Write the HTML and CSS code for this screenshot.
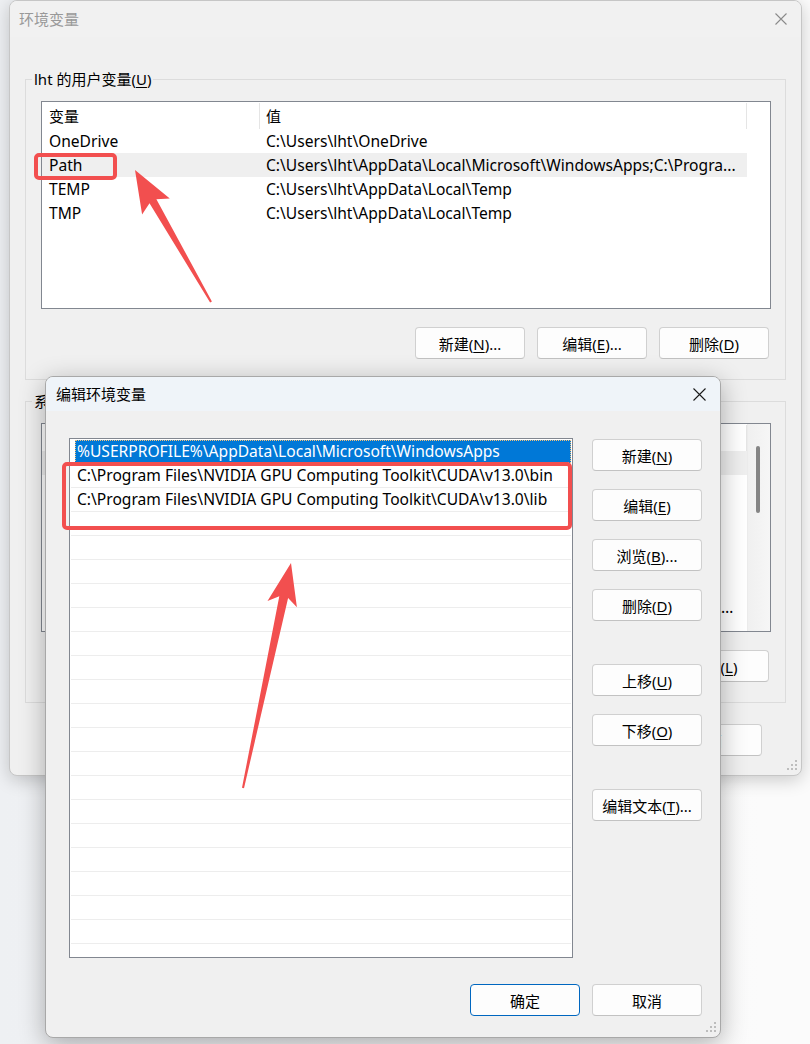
FILE: index.html
```html
<!DOCTYPE html>
<html lang="zh-CN">
<head>
    <meta charset="UTF-8">
    <title>环境变量</title>
    <link rel="stylesheet" href="styles.css">
</head>
<body>
<div class="desk">

    <!-- 后面的窗口：环境变量 -->
    <div class="win win-back">
        <div class="titlebar">
            <span class="title">环境变量</span>
            <svg class="close" width="12" height="12" viewBox="0 0 12 12"><path d="M0.5 0.5L11.5 11.5M11.5 0.5L0.5 11.5" stroke="#8a8a8a" stroke-width="1.1" fill="none"/></svg>
        </div>
        <div class="win-body">
            <fieldset class="group">
                <legend>lht 的用户变量(<u>U</u>)</legend>
                <div class="listview">
                    <div class="lv-main">
                        <div class="lv-head"><span class="c-name">变量</span><span class="c-val">值</span></div>
                        <div class="lv-row"><span class="c-name">OneDrive</span><span class="c-val">C:\Users\lht\OneDrive</span></div>
                        <div class="lv-row gray"><span class="c-name">Path</span><span class="c-val">C:\Users\lht\AppData\Local\Microsoft\WindowsApps;C:\Progra...</span></div>
                        <div class="lv-row"><span class="c-name">TEMP</span><span class="c-val">C:\Users\lht\AppData\Local\Temp</span></div>
                        <div class="lv-row"><span class="c-name">TMP</span><span class="c-val">C:\Users\lht\AppData\Local\Temp</span></div>
                    </div>
                </div>
                <div class="btn-row">
                    <button class="btn">新建(<u>N</u>)...</button>
                    <button class="btn">编辑(<u>E</u>)...</button>
                    <button class="btn">删除(<u>D</u>)</button>
                </div>
            </fieldset>

            <fieldset class="group group-sys">
                <legend>系统变量(<u>S</u>)</legend>
                <div class="listview tall">
                    <div class="lv-main">
                        <div class="lv-head"><span class="c-name">变量</span><span class="c-val">值</span></div>
                        <div class="lv-row gray"><span class="c-name">ComSpec</span><span class="c-val">C:\WINDOWS\system32\cmd.exe</span></div>
                        <div class="lv-row"><span class="c-name">DriverData</span><span class="c-val">C:\Windows\System32\Drivers\DriverData</span></div>
                        <div class="lv-row"><span class="c-name">JAVA_HOME</span><span class="c-val">C:\Program Files\Java\jdk-17</span></div>
                        <div class="lv-row"><span class="c-name">MAVEN_HOME</span><span class="c-val">C:\apache-maven-3.9.6</span></div>
                        <div class="lv-row"><span class="c-name">NUMBER_OF_PROCESSORS</span><span class="c-val">16</span></div>
                        <div class="lv-row"><span class="c-name">OS</span><span class="c-val">Windows_NT</span></div>
                        <div class="lv-row"><span class="c-name">Path</span><span class="c-val">C:\WINDOWS\system32;C:\WINDOWS;C:\WINDOWS\Wbem;C:\Program Files\NVI...</span></div>
                    </div>
                    <div class="vscroll"><div class="thumb"></div></div>
                </div>
                <div class="btn-row">
                    <button class="btn">新建(<u>W</u>)...</button>
                    <button class="btn">编辑(<u>I</u>)...</button>
                    <button class="btn">删除(<u>L</u>)</button>
                </div>
            </fieldset>

            <div class="dlg-foot back-foot">
                <button class="btn">确定</button>
                <button class="btn">取消</button>
            </div>
        </div>
        <svg class="grip" width="10" height="10" viewBox="0 0 10 10"><path d="M8 0h2v2h-2zM4 4h2v2h-2zM8 4h2v2h-2zM0 8h2v2h-2zM4 8h2v2h-2zM8 8h2v2h-2z" fill="#bdbdbd"/></svg>
    </div>

    <!-- 前面的窗口：编辑环境变量 -->
    <div class="win win-front">
        <div class="titlebar active">
            <span class="title">编辑环境变量</span>
            <svg class="close" width="13" height="13" viewBox="0 0 13 13"><path d="M0.5 0.5L12.5 12.5M12.5 0.5L0.5 12.5" stroke="#1a1a1a" stroke-width="1.1" fill="none"/></svg>
        </div>
        <div class="edit-body">
            <div class="pathlist">
                <div class="item"><span class="hl">%USERPROFILE%\AppData\Local\Microsoft\WindowsApps</span></div>
                <div class="item">C:\Program Files\NVIDIA GPU Computing Toolkit\CUDA\v13.0\bin</div>
                <div class="item">C:\Program Files\NVIDIA GPU Computing Toolkit\CUDA\v13.0\lib</div>
                <div class="item"></div>
                <div class="item"></div>
                <div class="item"></div>
                <div class="item"></div>
                <div class="item"></div>
                <div class="item"></div>
                <div class="item"></div>
                <div class="item"></div>
                <div class="item"></div>
                <div class="item"></div>
                <div class="item"></div>
                <div class="item"></div>
                <div class="item"></div>
                <div class="item"></div>
                <div class="item"></div>
                <div class="item"></div>
                <div class="item"></div>
                <div class="item"></div>
                <div class="item"></div>
            </div>
            <div class="side-btns">
                <button class="btn">新建(<u>N</u>)</button>
                <button class="btn">编辑(<u>E</u>)</button>
                <button class="btn">浏览(<u>B</u>)...</button>
                <button class="btn">删除(<u>D</u>)</button>
                <button class="btn gap-before">上移(<u>U</u>)</button>
                <button class="btn">下移(<u>O</u>)</button>
                <button class="btn gap-before">编辑文本(<u>T</u>)...</button>
            </div>
            <div class="dlg-foot front-foot">
                <button class="btn default">确定</button>
                <button class="btn">取消</button>
            </div>
        </div>
        <svg class="grip" width="10" height="10" viewBox="0 0 10 10"><path d="M8 0h2v2h-2zM4 4h2v2h-2zM8 4h2v2h-2zM0 8h2v2h-2zM4 8h2v2h-2zM8 8h2v2h-2z" fill="#bdbdbd"/></svg>
    </div>

    <!-- 红色标注 -->
    <svg class="marks" width="810" height="1044" viewBox="0 0 810 1044">
        <rect x="36" y="155" width="79" height="23" rx="3" fill="none" stroke="#f24f4f" stroke-width="4"/>
        <rect x="64" y="464" width="506" height="64" rx="3" fill="none" stroke="#f24f4f" stroke-width="4"/>
        <polygon points="135,170 169.8,198.4 156.4,199.2 211.9,301.5 210.1,302.5 149.5,203.2 142.1,214.4" fill="#f24f4f"/>
        <polygon points="291,563 296.9,607.2 288.1,598.1 244,788.2 242,787.8 279.3,596.3 267.5,601.0" fill="#f24f4f"/>
    </svg>
</div>
</body>
</html>
```

FILE: styles.css
```css
* { box-sizing: border-box; }
html, body { margin: 0; }
body { font-family: "Noto Sans", "Noto Sans CJK SC", sans-serif; font-size: 15px; color: #000; background: #f4f5f7; }
u { text-underline-offset: 2px; }

.desk { position: relative; width: 810px; height: 1044px; overflow: hidden; background: linear-gradient(to right, #eef0f3 0, #f1f2f4 300px, #fbfbfb 760px); }
.marks { position: absolute; left: 0; top: 0; z-index: 10; pointer-events: none; }

/* 窗口 */
.win { position: absolute; display: flex; flex-direction: column; background: #f0f0f0; border: 1px solid #c6c6c6; border-radius: 8px; overflow: hidden; }
.win-back { left: 9px; top: 0; width: 793px; height: 776px; box-shadow: 0 4px 18px rgba(0,0,0,0.2); }
.win-front { left: 45px; top: 376px; width: 676px; height: 662px; border-color: #a8a8a8; box-shadow: 0 6px 26px rgba(0,0,0,0.3); }

.titlebar { display: flex; align-items: center; justify-content: space-between; height: 36px; padding: 0 14px 0 9px; background: #f1f1f1; flex: none; }
.titlebar .title { color: #999; line-height: 20px; }
.titlebar.active { background: #eff4f9; padding: 0 14px 0 10px; height: 34px; }
.titlebar.active .title { color: #000; }
.close { display: block; }

.grip { position: absolute; right: 4px; bottom: 5px; }

/* 按钮 */
.btn { width: 110px; height: 32px; padding: 0; font: inherit; color: #000; background: #fdfdfd; border: 1px solid #d0d0d0; border-bottom-color: #c2c2c2; border-radius: 4px; }
.btn.default { border-color: #0067c0; }

/* 环境变量窗口 */
.win-body { padding: 32px 15px 0 15px; }
.group { margin: 0; padding: 12px 14px 20px 15px; border: 1px solid #dcdcdc; min-width: 0; }
.group legend { margin-left: -9px; padding: 0 2px; line-height: 20px; }
.group-sys { margin-top: 11px; }

.listview { display: flex; height: 208px; background: #fff; border: 1px solid #828790; overflow: hidden; }
.listview.tall { height: 209px; }
.lv-main { width: 705px; flex: none; }
.lv-head { display: flex; height: 27px; align-items: center; }
.lv-head span { height: 26px; line-height: 26px; border-right: 1px solid #e5e5e5; margin-top: 1px; }
.lv-row { display: flex; height: 24px; line-height: 24px; white-space: nowrap; font-size: 15.6px; }
.lv-row.gray { background: #efefef; }
.c-name { width: 218px; flex: none; padding-left: 7px; overflow: hidden; }
.c-val { width: 487px; flex: none; padding: 0 6px; overflow: hidden; text-overflow: ellipsis; }
.vscroll { flex: 1; background: linear-gradient(to right, #f0f0f0, #f6f6f6); border-left: 1px solid #ececec; }
.thumb { width: 4px; height: 67px; margin: 22px 0 0 8px; background: #858585; border-radius: 2px; }

.btn-row { display: flex; justify-content: flex-end; gap: 12px; margin-top: 18px; padding-right: 2px; }
.back-foot { margin-top: 21px; margin-right: 24px; }

/* 编辑环境变量窗口 */
.edit-body { display: grid; grid-template-columns: 504px 110px; column-gap: 19px; padding: 27px 18px 0 23px; }
.pathlist { height: 520px; background: #fff; border: 1px solid #828790; padding: 1px; overflow: hidden; }
.item { height: 24px; line-height: 23px; padding-left: 6px; border-bottom: 1px solid #ededed; white-space: nowrap; overflow: hidden; font-size: 15.6px; }
.item .hl { display: block; margin-left: -2px; padding-left: 2px; height: 23px; color: #fff; background: #0078d7; outline: 1px dotted #f6c27a; outline-offset: -1px; }
.side-btns { display: flex; flex-direction: column; gap: 18px; padding-top: 1px; }
.side-btns .gap-before { margin-top: 25px; }

.dlg-foot { display: flex; justify-content: flex-end; gap: 12px; }
.front-foot { grid-column: 1 / 3; margin-top: 26px; }
```
